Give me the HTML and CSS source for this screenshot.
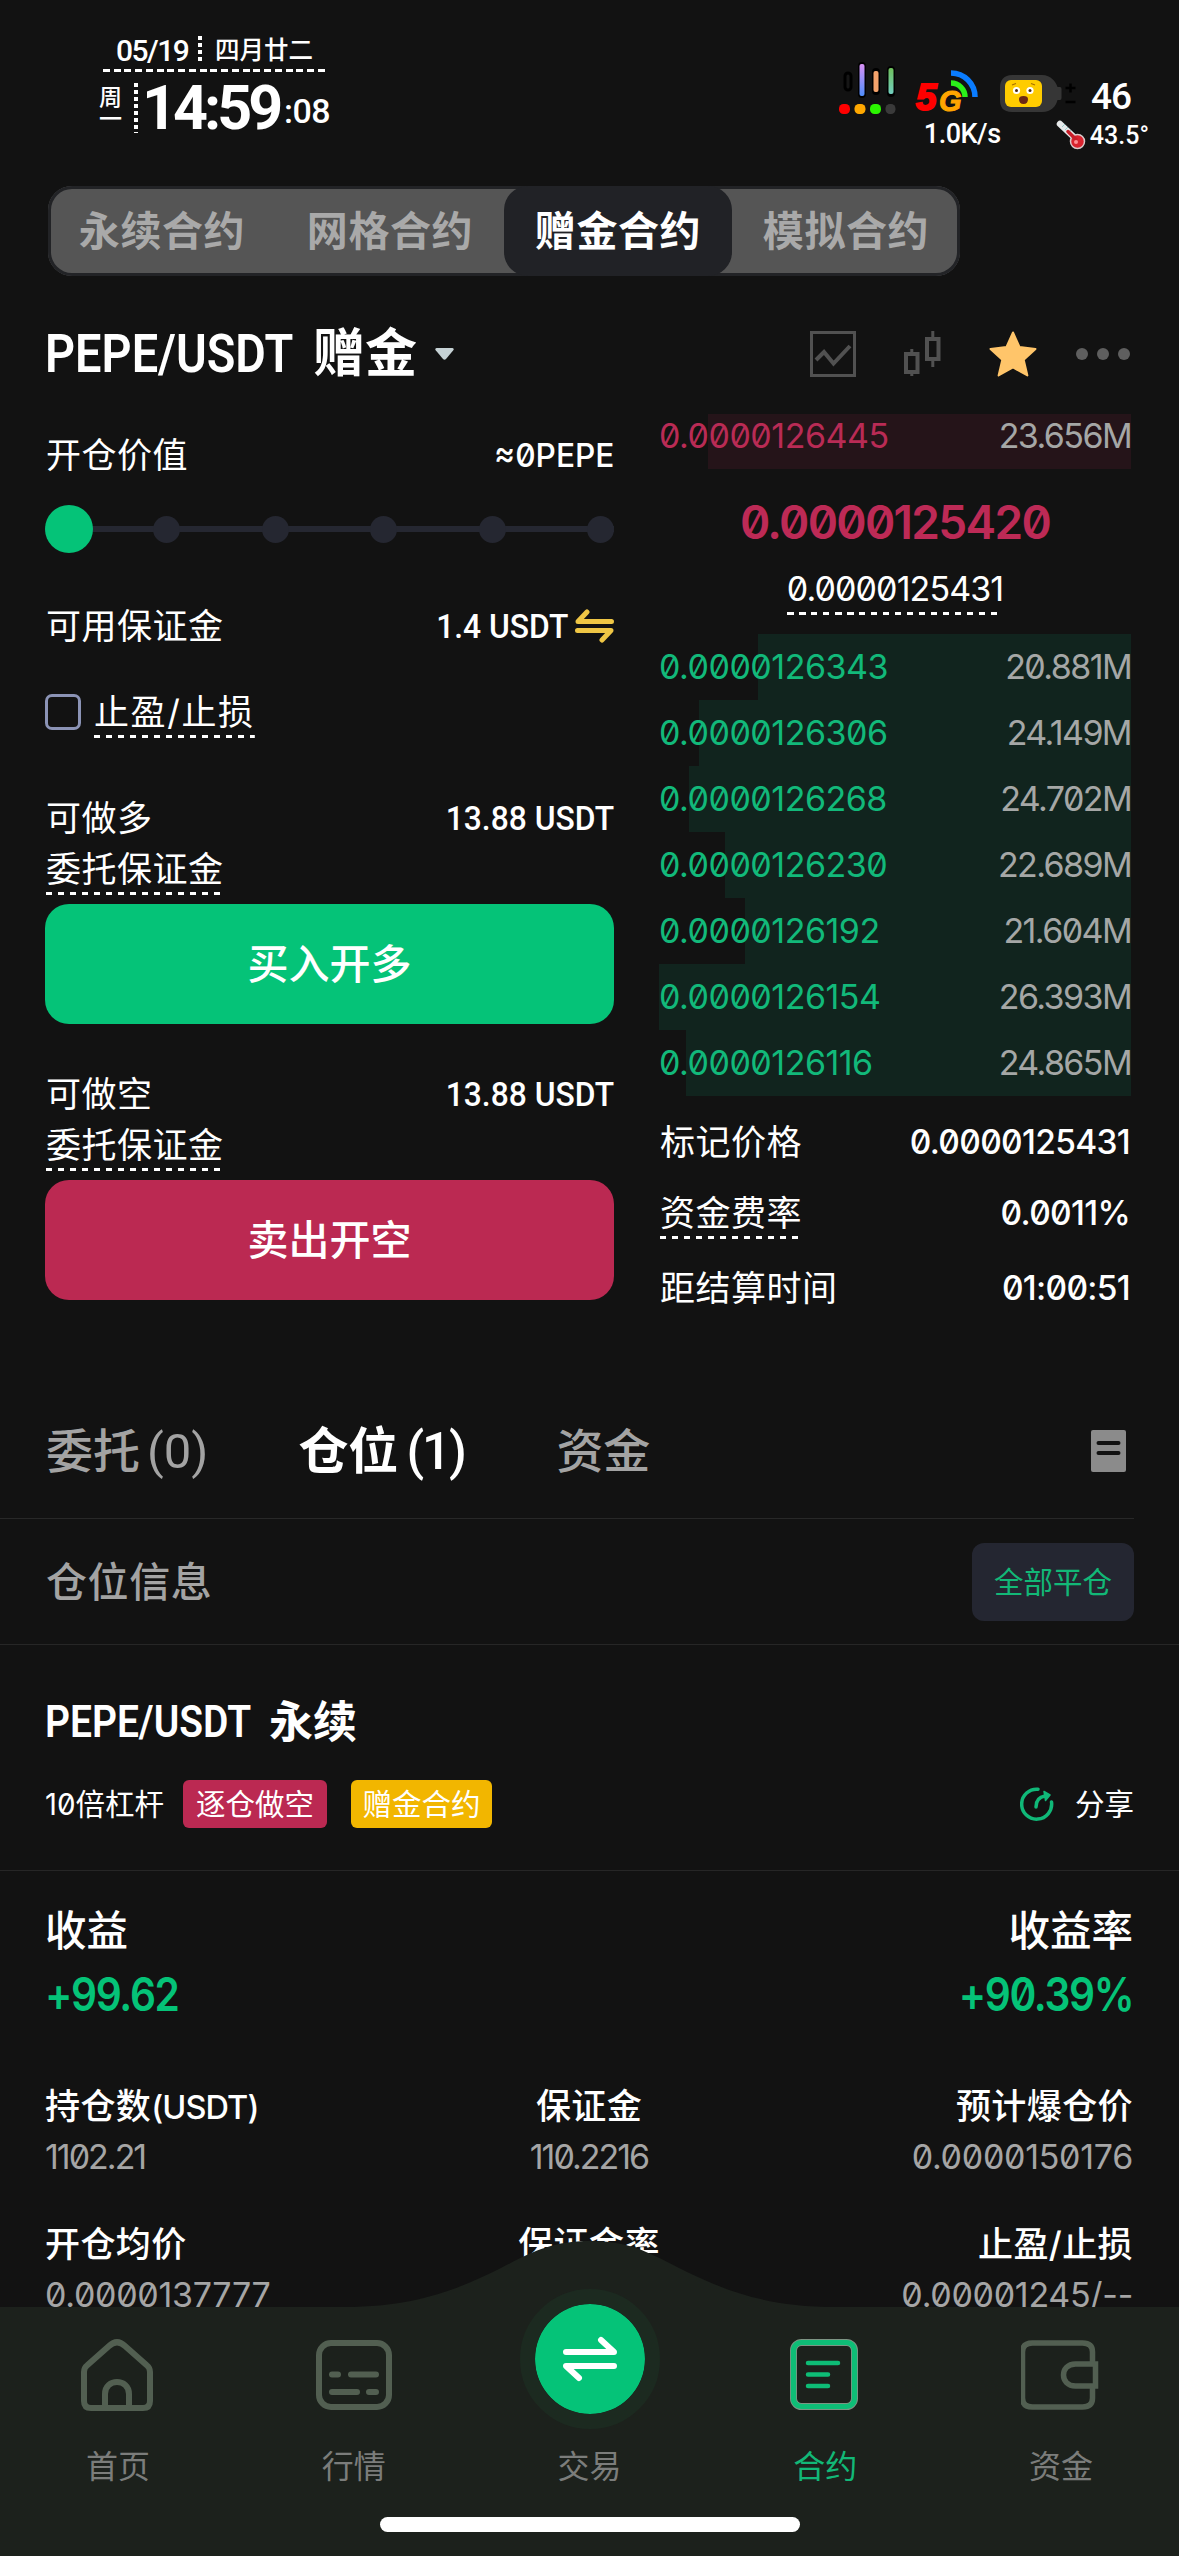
FILE: index.html
```html
<!DOCTYPE html>
<html lang="zh-CN">
<head>
<meta charset="utf-8">
<title>PEPE/USDT 赠金合约</title>
<link rel="stylesheet" href="styles.css">
</head>
<body>
<div class="page">
  <header class="status">
    <div class="clock">
      <div class="date"><span class="lat">05/19</span><i class="vdots"></i><span class="lunar">四月廿二</span></div>
      <div class="time">
        <div class="week"><span>周</span><span>一</span></div>
        <i class="vdots tall"></i>
        <span class="hm">14:59</span><span class="sec">:08</span>
      </div>
    </div>
    <div class="sys">
      <div class="sys-row">
        <svg class="signal" width="60" height="56" viewBox="836 60 60 56">
          <defs>
            <linearGradient id="g1" x1="0" y1="0" x2="0" y2="1"><stop offset="0" stop-color="#d991f5"/><stop offset="1" stop-color="#4f8dfa"/></linearGradient>
            <linearGradient id="g2" x1="0" y1="0" x2="0" y2="1"><stop offset="0" stop-color="#6fc05c"/><stop offset="1" stop-color="#72cfc0"/></linearGradient>
          </defs>
          <rect x="845" y="73" width="6" height="17" rx="3" fill="#161616" stroke="#000" stroke-width="3"/>
          <rect x="858" y="62" width="8" height="36" rx="4" fill="#000"/><rect x="859.5" y="64" width="5" height="32" rx="2" fill="url(#g1)"/>
          <rect x="872" y="68" width="8" height="27" rx="4" fill="#000"/><rect x="873.5" y="71" width="5" height="21" rx="2" fill="#f5a36c"/>
          <rect x="887" y="66" width="8" height="31" rx="4" fill="#000"/><rect x="888.5" y="68" width="5" height="26" rx="2" fill="url(#g2)"/>
          <rect x="839" y="104" width="11" height="10" rx="4.5" fill="#f00"/>
          <rect x="854.5" y="104" width="11" height="10" rx="4.5" fill="#ffa800"/>
          <rect x="870" y="104" width="11" height="10" rx="4.5" fill="#2bf500"/>
          <rect x="885.5" y="104" width="10" height="10" rx="4.5" fill="#3a3a3a"/>
        </svg>
        <div class="net">
          <span class="five">5</span><span class="gee">G</span>
          <svg class="waves" width="28" height="28" viewBox="0 0 28 28" fill="none" stroke-width="5.5"><path d="M0 13a14 14 0 0 1 14 14" stroke="#2bf01a"/><path d="M0 3a24 24 0 0 1 24 24" stroke="#0a7cff"/></svg>
        </div>
        <svg class="battery" width="76" height="38" viewBox="1000 75 76 38">
          <path d="M1012 75h30c9 0 14 7 15.500 12h2.500q1.500 0 1.500 2v9q0 2-1.500 2h-2.500c-1.500 6-6 12-15.500 12h-30c-9 0-12-5-12-12v-13c0-7 4-12 12-12z" fill="#363636"/>
          <rect x="1005" y="80" width="37" height="27" rx="6" fill="#fc0"/>
          <circle cx="1016.5" cy="90.5" r="3.6" fill="#fff"/><circle cx="1030" cy="90.5" r="3.6" fill="#fff"/>
          <circle cx="1016.5" cy="90.5" r="1.5" fill="#4a2a12"/><circle cx="1030" cy="90.5" r="1.5" fill="#4a2a12"/>
          <path d="M1019 99q0-3 4.500-3t4.500 3q0 5-4.500 5t-4.500-5z" fill="#6b2814"/>
          <path d="M1012 85l4-1.500M1031 83.500l4 1.500" stroke="#a86f00" stroke-width="1.2"/>
          <path d="M1065.500 88h10M1070.500 83.500v9M1065.500 102h10" stroke="#000" stroke-width="2.5"/>
        </svg>
        <span class="pct">46</span>
      </div>
      <div class="sys-row2">
        <span class="speed">1.0K/s</span>
        <svg class="thermo" width="30" height="30" viewBox="0 0 30 30"><path d="M4 4l16 15" stroke="#e6e9ea" stroke-width="6.5" stroke-linecap="round"/><path d="M6 7l3-3M9 10l3-3M12 13l3-3" stroke="#9cc" stroke-width="1"/><circle cx="21.5" cy="21.5" r="7" fill="#d9232e" stroke="#d9c9ca" stroke-width="1.5"/><path d="M12 11.500l8 8" stroke="#c81d28" stroke-width="3.5" stroke-linecap="round"/><circle cx="20" cy="22" r="2" fill="#ff8d92"/></svg>
        <span class="temp">43.5°</span>
      </div>
    </div>
  </header>

  <nav class="kinds"><a>永续合约</a><a>网格合约</a><a class="on">赠金合约</a><a>模拟合约</a></nav>

  <div class="pair">
    <h1><span class="sym">PEPE/USDT</span><span>赠金</span></h1>
    <svg class="caret" width="19" height="12" viewBox="0 0 19 12"><path d="M1.500 0h16q2 .5 .8 2.300l-7.300 8.700q-1.500 1.500-3 0L.7 2.300Q-.5.500 1.500 0z" fill="#c6d2d5"/></svg>
    <div class="tools">
      <svg width="46" height="46" viewBox="0 0 46 46" fill="none" stroke="#515151"><rect x="1.5" y="1.5" width="43" height="43" stroke-width="3"/><path d="M6 29l8-8 9.500 11.500L40 15" stroke-width="4"/></svg>
      <svg width="37" height="46" viewBox="0 0 37 46" fill="none" stroke="#515151"><rect x="2" y="23" width="11.5" height="18" stroke-width="4"/><rect x="23" y="8" width="11.5" height="20" stroke-width="4"/><path d="M7.800 18v4M7.800 42v3M28.800 0v7M28.800 29v7" stroke-width="3"/></svg>
      <svg width="48" height="46" viewBox="0 0 48 46"><path d="M24 1.500l6.600 14.600 15.900 1.900-11.800 10.800 3.700 15.700L24 36.500 9.600 44.500l3.700-15.700L1.500 18l15.900-1.900z" fill="#ffc56a" stroke="#ffc56a" stroke-width="2" stroke-linejoin="round"/></svg>
      <svg width="54" height="12" viewBox="0 0 54 12" fill="#5f5f5f"><circle cx="6" cy="6" r="6"/><circle cx="27" cy="6" r="6"/><circle cx="48" cy="6" r="6"/></svg>
    </div>
  </div>

  <main class="trade">
    <section class="order">
      <div class="row open"><span>开仓价值</span><span class="usd approx">≈0PEPE</span></div>
      <div class="slider"><i class="knob"></i><i></i><i></i><i></i><i></i><i></i></div>
      <div class="row avail"><span>可用保证金</span><span class="withicon"><span class="usd">1.4 USDT</span>
        <svg width="39" height="34" viewBox="0 0 39 34" fill="none" stroke="#efc645" stroke-width="5" stroke-linecap="round" stroke-linejoin="round"><path d="M36.500 12.500H3L12 3M2.500 21.500H36L27 31"/></svg></span></div>
      <div class="check"><i class="box"></i><span class="dash">止盈/止损</span></div>
      <div class="side">
        <div class="row"><span>可做多</span><span class="usd">13.88 USDT</span></div>
        <div><span class="dash">委托保证金</span></div>
        <button class="buy">买入开多</button>
      </div>
      <div class="side short">
        <div class="row"><span>可做空</span><span class="usd">13.88 USDT</span></div>
        <div><span class="dash">委托保证金</span></div>
        <button class="sell">卖出开空</button>
      </div>
    </section>

    <section class="book">
      <div class="asks"><div class="level ask" style="--w:423px"><span>0.0000126445</span><b>23.656M</b></div></div>
      <div class="last">0.0000125420</div>
      <div class="index"><span class="dash">0.0000125431</span></div>
      <div class="level" style="--w:373px"><span>0.0000126343</span><b>20.881M</b></div>
      <div class="level" style="--w:432px"><span>0.0000126306</span><b>24.149M</b></div>
      <div class="level" style="--w:442px"><span>0.0000126268</span><b>24.702M</b></div>
      <div class="level" style="--w:406px"><span>0.0000126230</span><b>22.689M</b></div>
      <div class="level" style="--w:386px"><span>0.0000126192</span><b>21.604M</b></div>
      <div class="level" style="--w:472px"><span>0.0000126154</span><b>26.393M</b></div>
      <div class="level" style="--w:445px"><span>0.0000126116</span><b>24.865M</b></div>
      <div class="fact mark"><span>标记价格</span><b>0.0000125431</b></div>
      <div class="fact"><span class="dash">资金费率</span><b>0.0011%</b></div>
      <div class="fact settle"><span>距结算时间</span><b>01:00:51</b></div>
    </section>
  </main>

  <div class="tabs">
    <a>委托<span>(0)</span></a><a class="on">仓位<span>(1)</span></a><a>资金</a>
    <svg width="35" height="42" viewBox="0 0 35 42"><rect width="35" height="42" rx="2" fill="#8b8b8b"/><path d="M7.500 13h20M7.500 23h20" stroke="#121212" stroke-width="4" stroke-linecap="round"/></svg>
  </div>

  <div class="info"><span>仓位信息</span><button>全部平仓</button></div>

  <section class="position">
    <h2><span class="sym2">PEPE/USDT</span><span>永续</span></h2>
    <div class="tags">
      <span class="lev">10倍杠杆</span><span class="tag red">逐仓做空</span><span class="tag gold">赠金合约</span>
      <span class="share"><svg width="34" height="34" viewBox="0 0 34 34" fill="none" stroke="#10b878" stroke-width="3.5" stroke-linecap="round"><path d="M18 2.200A15 15 0 1 0 31.500 15"/><path d="M16 20c0-6 3-10 9-11"/><path d="M24 4.500L30 8l-4.500 5.500z" fill="#10b878" stroke-width="1.5" stroke-linejoin="round"/></svg>分享</span>
    </div>
  </section>

  <section class="profit">
    <div><div class="plabel">收益</div><div class="pval">+99.62</div></div>
    <div class="r"><div class="plabel">收益率</div><div class="pval">+90.39%</div></div>
  </section>

  <section class="stats">
    <div><span>持仓数<em>(USDT)</em></span><b class="tight">1102.21</b></div>
    <div class="c"><span>保证金</span><b class="tight">110.2216</b></div>
    <div class="r"><span>预计爆仓价</span><b>0.0000150176</b></div>
    <div><span>开仓均价</span><b>0.0000137777</b></div>
    <div class="c"><span>保证金率</span></div>
    <div class="r"><span>止盈/止损</span><b>0.00001245/--</b></div>
  </section>

  <footer class="dock">
    <svg class="dock-bg" width="1179" height="315" viewBox="0 0 1179 315"><path d="M0 66H344C420 66 462 46 501 27C532 11 552 0 590 0S648 11 679 27C718 46 760 66 836 66H1179V315H0z" fill="#1c211c"/></svg>
    <nav class="items">
      <a><svg width="76" height="76" viewBox="80 2338 76 76" fill="none" stroke="#525f51" stroke-width="6"><path d="M84 2373q0-4 3-6.500l22-19.500q8-7.500 16 0l22 19.500q3 2.500 3 6.500v29q0 7-7 7h-52q-7 0-7-7z"/><path d="M105 2409v-14c0-16 24-16 24 0v14"/></svg><span>首页</span></a>
      <a><svg width="76" height="76" viewBox="316 2337 76 76" fill="none" stroke="#525f51" stroke-width="6"><rect x="319" y="2343" width="70" height="64" rx="12"/><path d="M332 2374.500h6M351 2374.500h25M332 2392h25M369 2392h7" stroke-linecap="round"/></svg><span>行情</span></a>
      <a class="swap"><i><svg width="56" height="46" viewBox="0 0 56 46" fill="none" stroke="#fff" stroke-width="6" stroke-linecap="round" stroke-linejoin="round"><path d="M4 16H52L39 4M52 30H4L17 42"/></svg></i><span>交易</span></a>
      <a class="on"><svg width="76" height="76" viewBox="787 2337 76 76" fill="none" stroke-linecap="round"><rect x="793.5" y="2342.5" width="61" height="64" rx="8" stroke="#7d9484" stroke-width="7"/><rect x="793.5" y="2342.5" width="61" height="64" rx="8" stroke="#0ebd76" stroke-width="5.2"/><path d="M808 2363h30M808 2374.500h20M808 2386h20" stroke="#0ebd76" stroke-width="4.5"/></svg><span>合约</span></a>
      <a><svg width="80" height="76" viewBox="1021 2337 80 76" fill="none" stroke="#525f51" stroke-width="5.5"><path d="M1092.500 2362v-10q0-9-10-9h-50q-10 0-10 9v46q0 9 10 9h50q10 0 10-9v-10"/><path d="M1095.500 2364h-20c-16 0-16 22 0 22h20z"/></svg><span>资金</span></a>
    </nav>
    <i class="homebar"></i>
  </footer>
</div>
</body>
</html>
```
FILE: styles.css
```css
* { box-sizing: border-box; }
body { margin: 0; background: #121212; }
i, em { font-style: normal; }
b { font-weight: 400; }
.page {
  position: relative;
  width: 1179px;
  height: 2556px;
  overflow: hidden;
  background: #121212;
  color: #fff;
  font-family: Inter, "Noto Sans CJK SC", sans-serif;
  font-feature-settings: "zero";
  font-size: 35px;
  display: flex;
  flex-direction: column;
}
.page > * { flex: none; }
button { border: 0; margin: 0; padding: 0; font: inherit; color: #fff; }

/* status bar */
.status {
  height: 186px;
  display: flex;
  justify-content: space-between;
  font-family: Roboto, "Noto Sans CJK SC", sans-serif;
  font-feature-settings: normal;
  font-weight: 500;
}
.clock { padding: 33px 0 0 99px; }
.date {
  width: 222px;
  height: 39px;
  margin-left: 4px;
  padding: 3px 0 0 13px;
  display: flex;
  line-height: 30px;
  font-size: 30px;
  background: repeating-linear-gradient(90deg, #fff 0 7px, transparent 7px 10.75px) bottom / 100% 3px no-repeat;
}
.date .lat { width: 82px; letter-spacing: -1.5px; }
.date .lunar { font-size: 24.5px; margin-left: 13px; }
.vdots { width: 4px; height: 28px; background: repeating-linear-gradient(#fff 0 4px, transparent 4px 7px); }
.vdots.tall { height: 50px; margin: 2px 5px 0 13px; }
.time { display: flex; padding-top: 9px; height: 62px; }
.week { display: flex; flex-direction: column; width: 22px; font-size: 23px; line-height: 22px; padding-top: 6px; }
.hm { font-size: 61px; line-height: 58px; letter-spacing: -4px; width: 142px; font-weight: 700; margin-top: -2px; margin-left: -1px; }
.sec { font-size: 34px; line-height: 46px; padding-top: 7px; letter-spacing: -0.5px; }
.sys { padding: 60px 33px 0 0; }
.sys-row { display: flex; height: 56px; }
.net { display: flex; padding: 12px 0 0 20px; width: 86px; font-family: "Liberation Sans", sans-serif; font-weight: 700; font-style: italic; }
.five { color: #f00; font-size: 37px; line-height: 52px; width: 23px; -webkit-text-stroke: 2px #f00; }
.gee { color: #ffa500; font-size: 29px; line-height: 52px; width: 12px; margin-top: 3px; -webkit-text-stroke: 1px #ffa500; }
.waves { flex: none; margin-top: -2px; }
.battery { margin: 15px 0 0 18px; }
.pct { font-size: 37px; line-height: 74px; padding-left: 15px; letter-spacing: -1px; width: 70px; }
.sys-row2 { display: flex; justify-content: flex-end; line-height: 36px; height: 36px; margin-right: -3px; }
.speed { font-size: 27px; width: 132px; letter-spacing: -0.5px; }
.thermo { margin-top: 4px; }
.temp { font-size: 25px; line-height: 40px; padding-left: 4px; }

/* contract kinds */
.kinds {
  width: 912px;
  height: 90px;
  margin-left: 48px;
  display: flex;
  background: #555;
  border-radius: 24px;
  box-shadow: inset 0 0 0 3px #222326;
  color: #a9a9a9;
  font-size: 41px;
  letter-spacing: 0.6px;
  font-weight: 700;
  line-height: 90px;
  text-align: center;
}
.kinds a { width: 228px; }
.kinds .on { background: #212226; color: #fff; border-radius: 24px; }

.pair { height: 138px; display: flex; align-items: center; padding: 18px 49px 0 45px; }
.pair h1 { display: flex; margin: 0; font-size: 52px; font-weight: 700; line-height: 70px; }
.sym { font: 600 53px/70px Roboto, sans-serif; width: 268px; white-space: nowrap; transform: scaleX(.885); transform-origin: left; }
.pair .caret { margin: 0 auto 0 18px; }
.tools { display: flex; align-items: center; }
.tools svg + svg { margin-left: 48px; }
.tools svg:last-child { margin-left: 39px; }

.trade { height: 966px; display: flex; justify-content: space-between; padding: 0 48px 0 45px; letter-spacing: 0.5px; }
.order { width: 569px; }
.order > * { padding-left: 1px; }
.row { display: flex; justify-content: space-between; align-items: center; height: 44px; line-height: 44px; }
.open { height: 82px; }
.avail { height: 128px; }
.usd { font-family: Roboto, sans-serif; font-weight: 500; font-size: 34px; letter-spacing: 0; transform: scaleX(.935); transform-origin: right; }
.approx { font-family: Inter, sans-serif; font-size: 33px; transform: scaleX(.96); }
.withicon { display: flex; align-items: center; gap: 7px; }
.order .slider { height: 66px; padding: 0; display: flex; align-items: center; justify-content: space-between; background: linear-gradient(#252731, #252731) center / 100% 6px no-repeat; }
.slider i { width: 27px; height: 27px; border-radius: 50%; background: #252731; }
.slider .knob { width: 48px; height: 48px; background: #05c378; margin-right: -21px; }
.dash {
  display: inline-block;
  vertical-align: top;
  line-height: 46px;
  padding-bottom: 3px;
  background: repeating-linear-gradient(90deg, #fff 0 6.5px, transparent 6.5px 12px) bottom / 100% 3px no-repeat;
}
.order .check { display: flex; height: 49px; margin-top: -1px; padding: 0; letter-spacing: 1.6px; }
.box { width: 36px; height: 36px; margin: 5px 13px 0 0; border: 3px solid #8b93b5; border-radius: 7px; }
.side { padding-top: 58px; }
.side .dash { margin-top: 6px; }
.side div:nth-child(2) { height: 64px; }
.side button { display: block; width: 569px; height: 120px; margin-left: -1px; border-radius: 24px; font-size: 41px; line-height: 118px; font-weight: 500; }
.side.short { padding-top: 48px; }
.buy { background: #05c378; }
.sell { background: #bb2952; }

.book { width: 472px; }
.asks { height: 55px; overflow: hidden; display: flex; align-items: flex-end; }
.level {
  flex: none;
  width: 472px;
  height: 66px;
  display: flex;
  justify-content: space-between;
  padding: 0 1px 0 0;
  line-height: 66px;
  font-size: 34px;
  letter-spacing: -0.5px;
  color: #12b97a;
  background: linear-gradient(#11241e, #11241e) right / var(--w) 100% no-repeat;
}
.level b { color: #a5a7a6; letter-spacing: -1.6px; margin-right: -1px; }
.ask { color: #b92b55; background-image: linear-gradient(#251419, #251419); }
.last { height: 97px; padding-top: 9px; line-height: 88px; font-size: 46px; font-weight: 600; text-align: center; color: #bd2a56; letter-spacing: -1.7px; }
.index { height: 68px; text-align: center; font-size: 34px; letter-spacing: -0.9px; }
.fact { display: flex; justify-content: space-between; line-height: 46px; height: 49px; margin-top: 2px; padding: 0 1px; }
.fact b { font-weight: 500; font-size: 33.5px; letter-spacing: -0.7px; }
.mark { height: 92px; line-height: 92px; margin-top: 0; }
.settle { margin-top: 26px; }

/* position tabs */
.tabs {
  width: 1134px;
  height: 139px;
  display: flex;
  align-items: center;
  padding: 4px 8px 0 46px;
  border-bottom: 1px solid #282828;
  color: #a3a3a3;
  font-size: 47px;
  line-height: 60px;
  font-weight: 500;
}
.tabs a { white-space: nowrap; height: 60px; }
.tabs span { font-family: Roboto, sans-serif; font-size: 49px; font-weight: 400; margin-left: 7px; font-feature-settings: normal; }
.tabs .on { color: #fff; font-size: 50px; font-weight: 700; width: 258px; margin: 0 0 0 90px; }
.tabs .on span { font-size: 51px; font-weight: 500; margin-left: 8px; letter-spacing: -2px; }
.tabs svg { margin-left: auto; }
.info {
  height: 126px;
  display: flex;
  justify-content: space-between;
  align-items: center;
  padding: 0 45px 0 46px;
  border-bottom: 1px solid #262626;
  color: #a3a3a3;
  font-size: 41px;
  line-height: 78px;
  letter-spacing: 0.6px;
  font-weight: 500;
}
.info button { width: 162px; height: 78px; border-radius: 12px; background: #242631; color: #12b877; font-size: 29.5px; letter-spacing: 0; font-weight: 400; }

.position { height: 226px; padding: 44px 45px 0 45px; border-bottom: 1px solid #262626; }
.position h2 { display: flex; margin: 0; font-size: 44px; line-height: 66px; font-weight: 700; }
.sym2 { font: 600 45px/66px Roboto, sans-serif; width: 224px; white-space: nowrap; transform: scaleX(.865); transform-origin: left; }
.tags { display: flex; margin-top: 25px; height: 48px; line-height: 48px; font-size: 29.5px; }
.lev { width: 138px; white-space: nowrap; }
.tag { height: 48px; border-radius: 6px; text-align: center; }
.red { width: 144px; background: #bb2952; }
.gold { width: 141px; margin-left: 24px; background: #f2b600; }
.share { display: flex; align-items: center; gap: 21px; margin-left: auto; }

.profit { display: flex; justify-content: space-between; height: 210px; padding: 30px 46px 0 45px; }
.r { text-align: right; }
.c { text-align: center; }
.plabel { font-size: 41.5px; line-height: 60px; font-weight: 500; }
.pval { margin-top: 3px; font-size: 46px; line-height: 60px; font-weight: 600; color: #05c378; letter-spacing: -1.5px; transform: scaleX(.885); transform-origin: left; }
.r .pval { transform-origin: right; }
.stats { display: grid; grid-template-columns: 1fr 1fr 1fr; padding: 0 46px 0 45px; row-gap: 37px; }
.stats span, .stats b { display: block; height: 50px; line-height: 50px; }
.stats span { margin-bottom: 1px; font-weight: 500; letter-spacing: 0.4px; }
.stats em { font-size: 32.5px; letter-spacing: -0.9px; }
.stats b { color: #a5a5a5; font-size: 34px; letter-spacing: -0.3px; font-weight: 400; }
.stats .tight { letter-spacing: -2px; }

/* bottom dock overlays the scrolling content */
.dock { position: absolute; left: 0; bottom: 0; width: 1179px; height: 315px; }
.dock-bg { position: absolute; left: 0; top: 0; }
.items { position: relative; display: grid; grid-template-columns: repeat(5, 1fr); padding-top: 48px; height: 276px; font-size: 32px; color: #7b7d7b; }
.items a { display: flex; flex-direction: column; align-items: center; }
.items svg { margin-top: 48px; }
.items span { line-height: 50px; margin-top: 29px; }
.items .on { color: #12b877; }
.items .swap i { display: flex; align-items: center; justify-content: center; width: 140px; height: 140px; margin-left: 2px; border: 15px solid #1c2a20; border-radius: 50%; background: #05c378; background-clip: padding-box; }
.items .swap svg { margin: 0; }
.items .swap span { margin-top: 13px; }
.homebar { position: relative; display: block; width: 420px; height: 15px; margin: 0 auto; border-radius: 8px; background: #fff; }
```
